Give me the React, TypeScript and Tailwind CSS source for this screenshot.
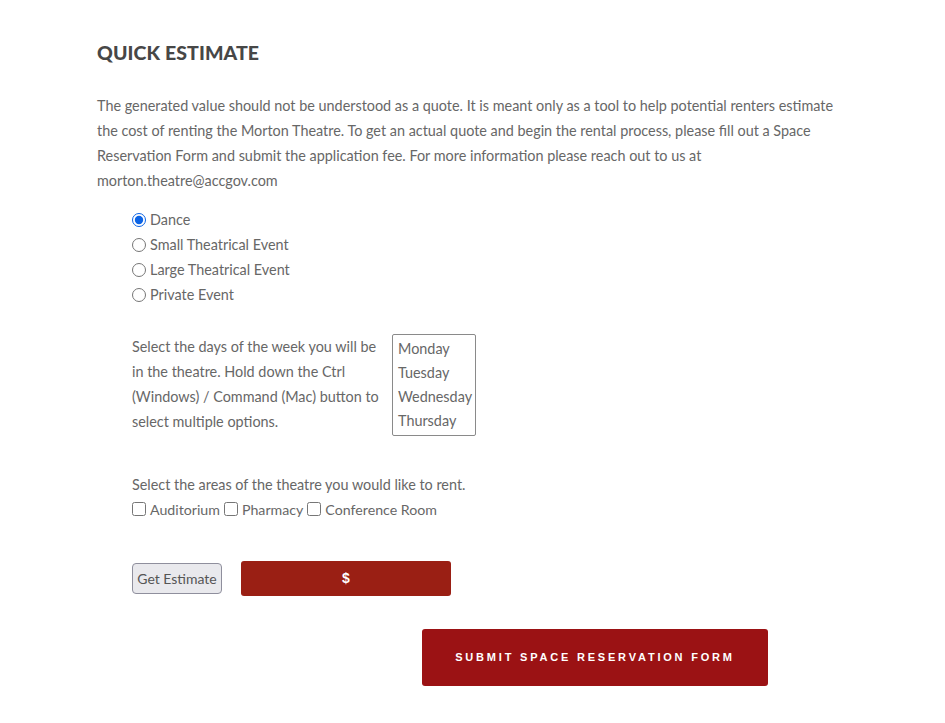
import React, { useState } from "react";

export default function App() {
  const [event, setEvent] = useState("dance");
  const events = [
    { id: "dance", label: "Dance" },
    { id: "small", label: "Small Theatrical Event" },
    { id: "large", label: "Large Theatrical Event" },
    { id: "private", label: "Private Event" },
  ];
  return (
    <div className="min-h-[723px] bg-white text-[#676767] font-['Lato','Liberation_Sans',sans-serif] text-[14.4px]">
      <div className="pl-[97px] pt-[40px] w-[860px]">
        <h2 className="text-[19.5px] leading-[26px] font-black tracking-[0.1px] text-[#474747] font-['Lato','DejaVu_Sans',sans-serif]">
          QUICK ESTIMATE
        </h2>
        <p className="mt-[27px] leading-[25px] w-[745px]">
          The generated value should not be understood as a quote. It is meant only as a tool to help potential renters estimate the cost of renting the Morton Theatre. To get an actual quote and begin the rental process, please fill out a Space Reservation Form and submit the application fee. For more information please reach out to us at morton.theatre@accgov.com
        </p>

        <div className="pl-[35px] mt-[14px]">
          <div className="flex flex-col">
            {events.map((e) => (
              <label key={e.id} className="flex items-center h-[25px] gap-[4px]">
                <input
                  type="radio"
                  name="event"
                  checked={event === e.id}
                  onChange={() => setEvent(e.id)}
                  className="m-0 w-[14px] h-[14px] accent-[#0b63e5]"
                />
                <span>{e.label}</span>
              </label>
            ))}
          </div>

          <div className="flex mt-[27px] items-start">
            <p className="w-[250px] leading-[25px]">
              Select the days of the week you will be in the theatre. Hold down the Ctrl (Windows) / Command (Mac) button to select multiple options.
            </p>
            <div className="ml-[10px] border border-[#8a8a8a] rounded-[2px] w-[84px] h-[102px] pl-[5px] pt-[2px] flex flex-col">
              {["Monday", "Tuesday", "Wednesday", "Thursday"].map((d) => (
                <div key={d} className="h-[24px] leading-[24px]">
                  {d}
                </div>
              ))}
            </div>
          </div>

          <p className="mt-[36px] leading-[25px]">Select the areas of the theatre you would like to rent.</p>
          <div className="flex items-center h-[25px] text-[14.2px]">
            {["Auditorium", "Pharmacy", "Conference Room"].map((a, i) => (
              <label key={a} className={`flex items-center gap-[4px] ${i > 0 ? "ml-[4px]" : ""}`}>
                <input type="checkbox" className="m-0 w-[14px] h-[14px]" />
                <span>{a}</span>
              </label>
            ))}
          </div>

          <div className="flex items-center mt-[39px] gap-[19px]">
            <button className="h-[31px] w-[90px] bg-[#e9e9ed] border border-[#8f8f9d] rounded-[4px] text-[#555] text-[14px] font-['Lato','Liberation_Sans',sans-serif]">
              Get Estimate
            </button>
            <div className="h-[35px] w-[210px] bg-[#9a1f14] rounded-[3px] flex items-center justify-center text-white font-bold text-[14px] font-['Liberation_Sans',sans-serif]">
              $
            </div>
          </div>
        </div>

        <div className="flex mt-[33px] pl-[325px]">
          <button className="h-[57px] w-[346px] bg-[#9b1214] rounded-[3px] text-white text-[11px] font-bold tracking-[2.8px] font-['Liberation_Sans',sans-serif]">
            SUBMIT SPACE RESERVATION FORM
          </button>
        </div>
      </div>
    </div>
  );
}
